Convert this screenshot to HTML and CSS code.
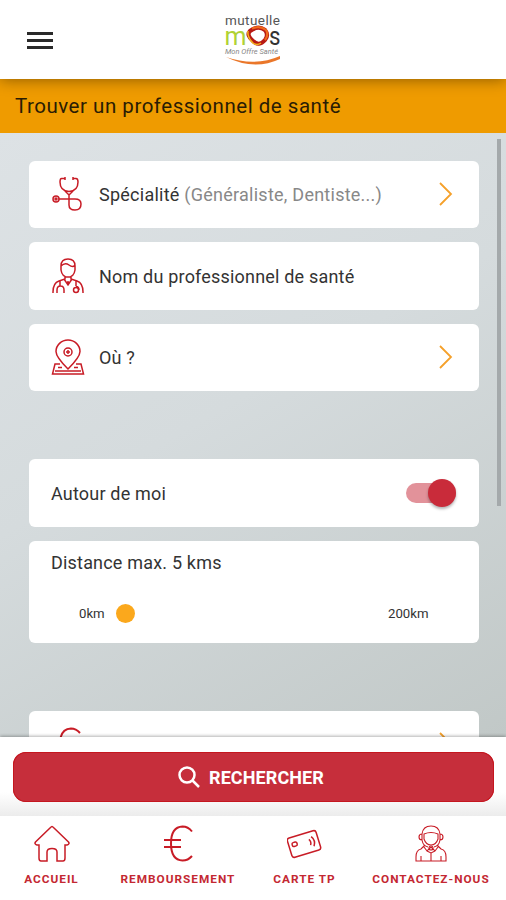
FILE: index.html
```html
<!DOCTYPE html>
<html lang="fr">
<head>
    <meta charset="UTF-8">
    <meta name="viewport" content="width=device-width, initial-scale=1.0">
    <title>Trouver un professionnel de santé</title>
    <link rel="stylesheet" href="styles.css">
</head>
<body>

    <!-- Header -->
    <header class="header">
        <button class="menu-button" aria-label="Menu">
            <span></span>
            <span></span>
            <span></span>
        </button>
        <svg class="logo" width="60" height="56" viewBox="0 0 60 56">
            <text class="logo-top" x="2" y="12.500" textLength="55">mutuelle</text>
            <text class="logo-m" x="1.500" y="33" textLength="22" lengthAdjust="spacingAndGlyphs">m</text>
            <text class="logo-s" x="46" y="33" textLength="11.500" lengthAdjust="spacingAndGlyphs">s</text>
            <path d="M27 19 Q35 13 42 18 Q46 23 42 28 Q36 35 30 29 Q23 23 27 19Z" fill="none" stroke="#b81a14" stroke-width="4.200"/>
            <path d="M25 19 Q24 25 30 31 Q34 34 38 31" fill="none" stroke="#f4b51c" stroke-width="1.500"/>
            <path d="M29 16.500 Q37 13 43 18 Q46 23 42 28" fill="none" stroke="#ef6a1c" stroke-width="2.200"/>
            <text class="logo-sub" x="2" y="42" textLength="53" lengthAdjust="spacingAndGlyphs">Mon Offre Santé</text>
            <path d="M3 45 Q32 55 57 44 L57 47 Q31 59 3 45Z" fill="#ea772a"/>
        </svg>
    </header>

    <div class="title-bar">
        <h1>Trouver un professionnel de santé</h1>
    </div>

    <!-- Search criteria -->
    <main class="content">
        <div class="card">
            <svg class="card-icon" width="34" height="38" viewBox="0 0 34 38">
                <path d="M14 3.500h-3.500Q9 3.500 9 7Q9 16 18 16.500Q27 16 27 7Q27 3.500 25 3.500h-3M14 2v3M22 2v3M14 16l4 4l4-4M18 20v10Q18 35 24 35Q30 35 30 29Q30 24 24 24H8"/>
                <circle cx="5" cy="24" r="3"/>
                <circle cx="5" cy="24" r="1"/>
            </svg>
            <span class="card-label speciality">Spécialité <em>(Généraliste, Dentiste...)</em></span>
            <svg class="chevron" width="14" height="24" viewBox="0 0 14 24"><path d="M1 1l11 11L1 23"/></svg>
        </div>

        <div class="card">
            <svg class="card-icon" width="34" height="38" viewBox="0 0 34 38">
                <path d="M10 9Q10 2 17 2T24 9V13Q23 20 17 20T10 13ZM10 9Q14 5 18 8T24 8M14 19v3l-6 2Q2 26 2 35v1M20 19v3l6 2Q32 26 32 35v1M13 22l4 6l4-6M17 24v4M9 24v5M6 36v-3Q6 29 9.500 29T13 33v3M25 24v5M25 29Q28 30 28 33"/>
                <circle cx="25" cy="33" r="2.500"/>
            </svg>
            <span class="card-label">Nom du professionnel de santé</span>
        </div>

        <div class="card">
            <svg class="card-icon" width="34" height="38" viewBox="0 0 34 38">
                <path d="M17 31Q5 19 5 13.500A12 11.500 0 0 1 29 13.500Q29 19 17 31ZM9 26H4L1.500 36H32.500L30 26h-5M4 33h26M7 29.500h4M23 29.500h4"/>
                <circle cx="17" cy="14" r="4"/>
                <path d="M17 12v4M15 14h4"/>
            </svg>
            <span class="card-label">Où ?</span>
            <svg class="chevron" width="14" height="24" viewBox="0 0 14 24"><path d="M1 1l11 11L1 23"/></svg>
        </div>

        <div class="card card-around">
            <span class="card-label">Autour de moi</span>
            <span class="switch"><span class="switch-knob"></span></span>
        </div>

        <div class="card card-distance">
            <span class="card-label">Distance max. 5 kms</span>
            <div class="range">
                <span>0km</span>
                <span class="range-knob"></span>
                <span class="range-max">200km</span>
            </div>
        </div>

        <div class="card card-last">
            <svg class="card-icon" width="34" height="38" viewBox="0 0 34 38">
                <path class="euro" d="M29 8Q25 3.500 20 3.500Q9 4 9 19Q9 34 20 34.500Q25 34.500 29 30M3 15h15M3 22h15"/>
            </svg>
            <span class="card-label"></span>
            <svg class="chevron" width="14" height="24" viewBox="0 0 14 24"><path d="M1 1l11 11L1 23"/></svg>
        </div>

        <div class="scrollbar"></div>
    </main>

    <!-- Search button -->
    <div class="action-bar">
        <button class="search-button">
            <svg width="22" height="22" viewBox="0 0 22 22"><circle cx="9" cy="9" r="7.500"/><path d="M14.500 14.500L21 21"/></svg>
            <span>RECHERCHER</span>
        </button>
    </div>

    <!-- Bottom navigation -->
    <nav class="nav">
        <a class="nav-item">
            <svg width="36" height="38" viewBox="0 0 36 38">
                <path d="M18 1.500Q17.500 1.500 16 3L1.500 17Q0 19 3 20H5V33Q5 36 7 36H13V27Q13 23.500 18 23.500T23 27V36H29Q31 36 31 33V20H33Q36 19 34.500 17L20 3Q18.500 1.500 18 1.500Z"/>
            </svg>
            <span>ACCUEIL</span>
        </a>
        <a class="nav-item">
            <svg width="36" height="38" viewBox="0 0 36 38">
                <path class="euro" d="M32 6.500Q28 1.500 22.500 1.500Q11 2 11 18.500T22.500 35.500Q28 35.500 32 31M4 15h17M4 22h17"/>
            </svg>
            <span>REMBOURSEMENT</span>
        </a>
        <a class="nav-item">
            <svg width="36" height="38" viewBox="0 0 36 38">
                <g transform="rotate(-17 17 19)">
                    <rect x="2" y="9" width="30" height="20" rx="2.500"/>
                    <rect x="5.500" y="14.500" width="5" height="4" rx="1.500"/>
                    <path d="M23 16Q25 19 23 22M26 14Q29.500 19 26 24"/>
                </g>
            </svg>
            <span>CARTE TP</span>
        </a>
        <a class="nav-item">
            <svg class="thin" width="36" height="38" viewBox="0 0 36 38">
                <path d="M9 9Q10 1 18 1T27 9M11 9Q18 6 25 9V14Q23 20 18 20T11 14ZM9 9Q6 9 6 12T9 15ZM27 9Q30 9 30 12T27 15ZM9 15Q10 21 15 22M27 15Q26 21 21 22M12 20l-4 4Q3 25 3 32V36H33V32Q33 25 28 24L24 20M11 22l3 4l4-4l4 4l3-4M14 26l4 2l4-2M18 28v8M8 31v5M28 31v5"/>
                <circle cx="18" cy="23" r="2"/>
            </svg>
            <span>CONTACTEZ-NOUS</span>
        </a>
    </nav>

</body>
</html>
```

FILE: styles.css
```css
html, body {
    height: 100%;
    margin: 0;
    overflow: hidden;
}

* {
    box-sizing: border-box;
}

body {
    display: flex;
    flex-direction: column;
    background: #fff;
    color: #333;
    font-family: Roboto, "Liberation Sans", sans-serif;
}

button {
    border: none;
    padding: 0;
    font-family: inherit;
}

svg {
    flex: none;
    fill: none;
    stroke: #c81c26;
    stroke-width: 1.5;
}

/* Header */
.header {
    position: relative;
    z-index: 2;
    flex: none;
    display: grid;
    grid-template-columns: 1fr 60px 1fr;
    align-items: center;
    height: 79px;
    padding: 0 27px;
    background: #fff;
    box-shadow: 0 1px 14px rgba(0, 0, 0, 0.4);
}

.menu-button {
    display: flex;
    flex-direction: column;
    gap: 4px;
    width: 26px;
    margin-top: 1px;
    background: none;
}

.menu-button span {
    height: 3px;
    background: #2a2a2a;
}

.logo {
    stroke: none;
}

.logo-top {
    fill: #555;
    font-size: 13.5px;
}

.logo-m {
    fill: #b0d235;
    font-size: 25px;
}

.logo-s {
    fill: #333;
    font-size: 25px;
}

.logo-sub {
    fill: #888;
    font-size: 7.5px;
    font-style: italic;
}

/* Page title */
.title-bar {
    flex: none;
    height: 53.5px;
    padding: 0 15px;
    background: #ef9b00;
}

.title-bar h1 {
    margin: 0;
    font-size: 20.5px;
    font-weight: 400;
    line-height: 54px;
    letter-spacing: 0.52px;
    color: #2a1c04;
}

/* Search criteria */
.content {
    position: relative;
    flex: 1;
    overflow: hidden;
    padding: 28px 27.5px 0 28.5px;
    background: linear-gradient(150deg, #dde2e5 0%, #d5dbdd 45%, #c1c8c7 100%);
}

.card {
    display: flex;
    align-items: center;
    height: 67.5px;
    margin-bottom: 14px;
    padding: 0 26px 0 22.5px;
    border-radius: 6px;
    background: #fff;
}

.card-icon {
    margin-right: 14px;
}

.card-label {
    flex: 1;
    padding-top: 1px;
    font-size: 18px;
    letter-spacing: 0.19px;
    white-space: nowrap;
}

.speciality {
    letter-spacing: 0.25px;
}

.card-label em {
    font-style: normal;
    color: #888;
}

.chevron {
    stroke: #f5a02a;
    stroke-width: 1.8;
}

.card-around {
    margin-top: 68px;
    padding-right: 23px;
}

.switch {
    display: flex;
    align-items: center;
    justify-content: flex-end;
    width: 50px;
    height: 20px;
    border-radius: 10px;
    background: #e2929a;
}

.switch-knob {
    flex: none;
    width: 28px;
    height: 28px;
    border-radius: 50%;
    background: #c92b3a;
    box-shadow: 0 2px 3px rgba(0, 0, 0, 0.3);
}

.card-distance {
    flex-direction: column;
    align-items: stretch;
    height: 102.5px;
    padding-top: 10px;
}

.card-distance .card-label {
    flex: none;
    line-height: 22px;
}

.range {
    display: flex;
    align-items: center;
    margin: 30px 24px 0 28px;
    font-size: 13.2px;
    line-height: 19px;
}

.range-knob {
    width: 19px;
    height: 19px;
    margin-left: 11px;
    border-radius: 50%;
    background: #fba81c;
}

.range-max {
    margin-left: auto;
}

.card-last {
    margin-top: 67.5px;
}

.euro {
    stroke-width: 2;
}

.scrollbar {
    position: absolute;
    top: 6px;
    right: 5px;
    width: 4px;
    height: 367px;
    background: #a4a9ab;
}

/* Search button */
.action-bar {
    position: relative;
    flex: none;
    height: 79px;
    padding: 15px 12px 0 13px;
    background: linear-gradient(#fff 0%, #fff 70%, #ececec 100%);
    box-shadow: 0 -1px 3px rgba(0, 0, 0, 0.3);
}

.search-button {
    display: flex;
    align-items: center;
    justify-content: center;
    gap: 9px;
    width: 100%;
    height: 50px;
    padding-right: 5px;
    border-radius: 13px;
    background: #c62e3b;
    box-shadow: inset 0 0 0 1px #c5161f;
    color: #fff;
    font-size: 18px;
    font-weight: 700;
    letter-spacing: 0.1px;
}

.search-button svg {
    stroke: #fff;
    stroke-width: 2.5;
}

/* Bottom navigation */
.nav {
    position: relative;
    flex: none;
    display: grid;
    grid-template-columns: 103px 150px 103px 150px;
    height: 84px;
    padding-top: 9px;
    background: #fff;
}

.nav-item {
    display: flex;
    flex-direction: column;
    align-items: center;
    gap: 9px;
    color: #c42832;
    font-size: 11.8px;
    font-weight: 700;
    line-height: 14px;
    letter-spacing: 1px;
    white-space: nowrap;
}

.thin {
    stroke-width: 1.1;
}
```
